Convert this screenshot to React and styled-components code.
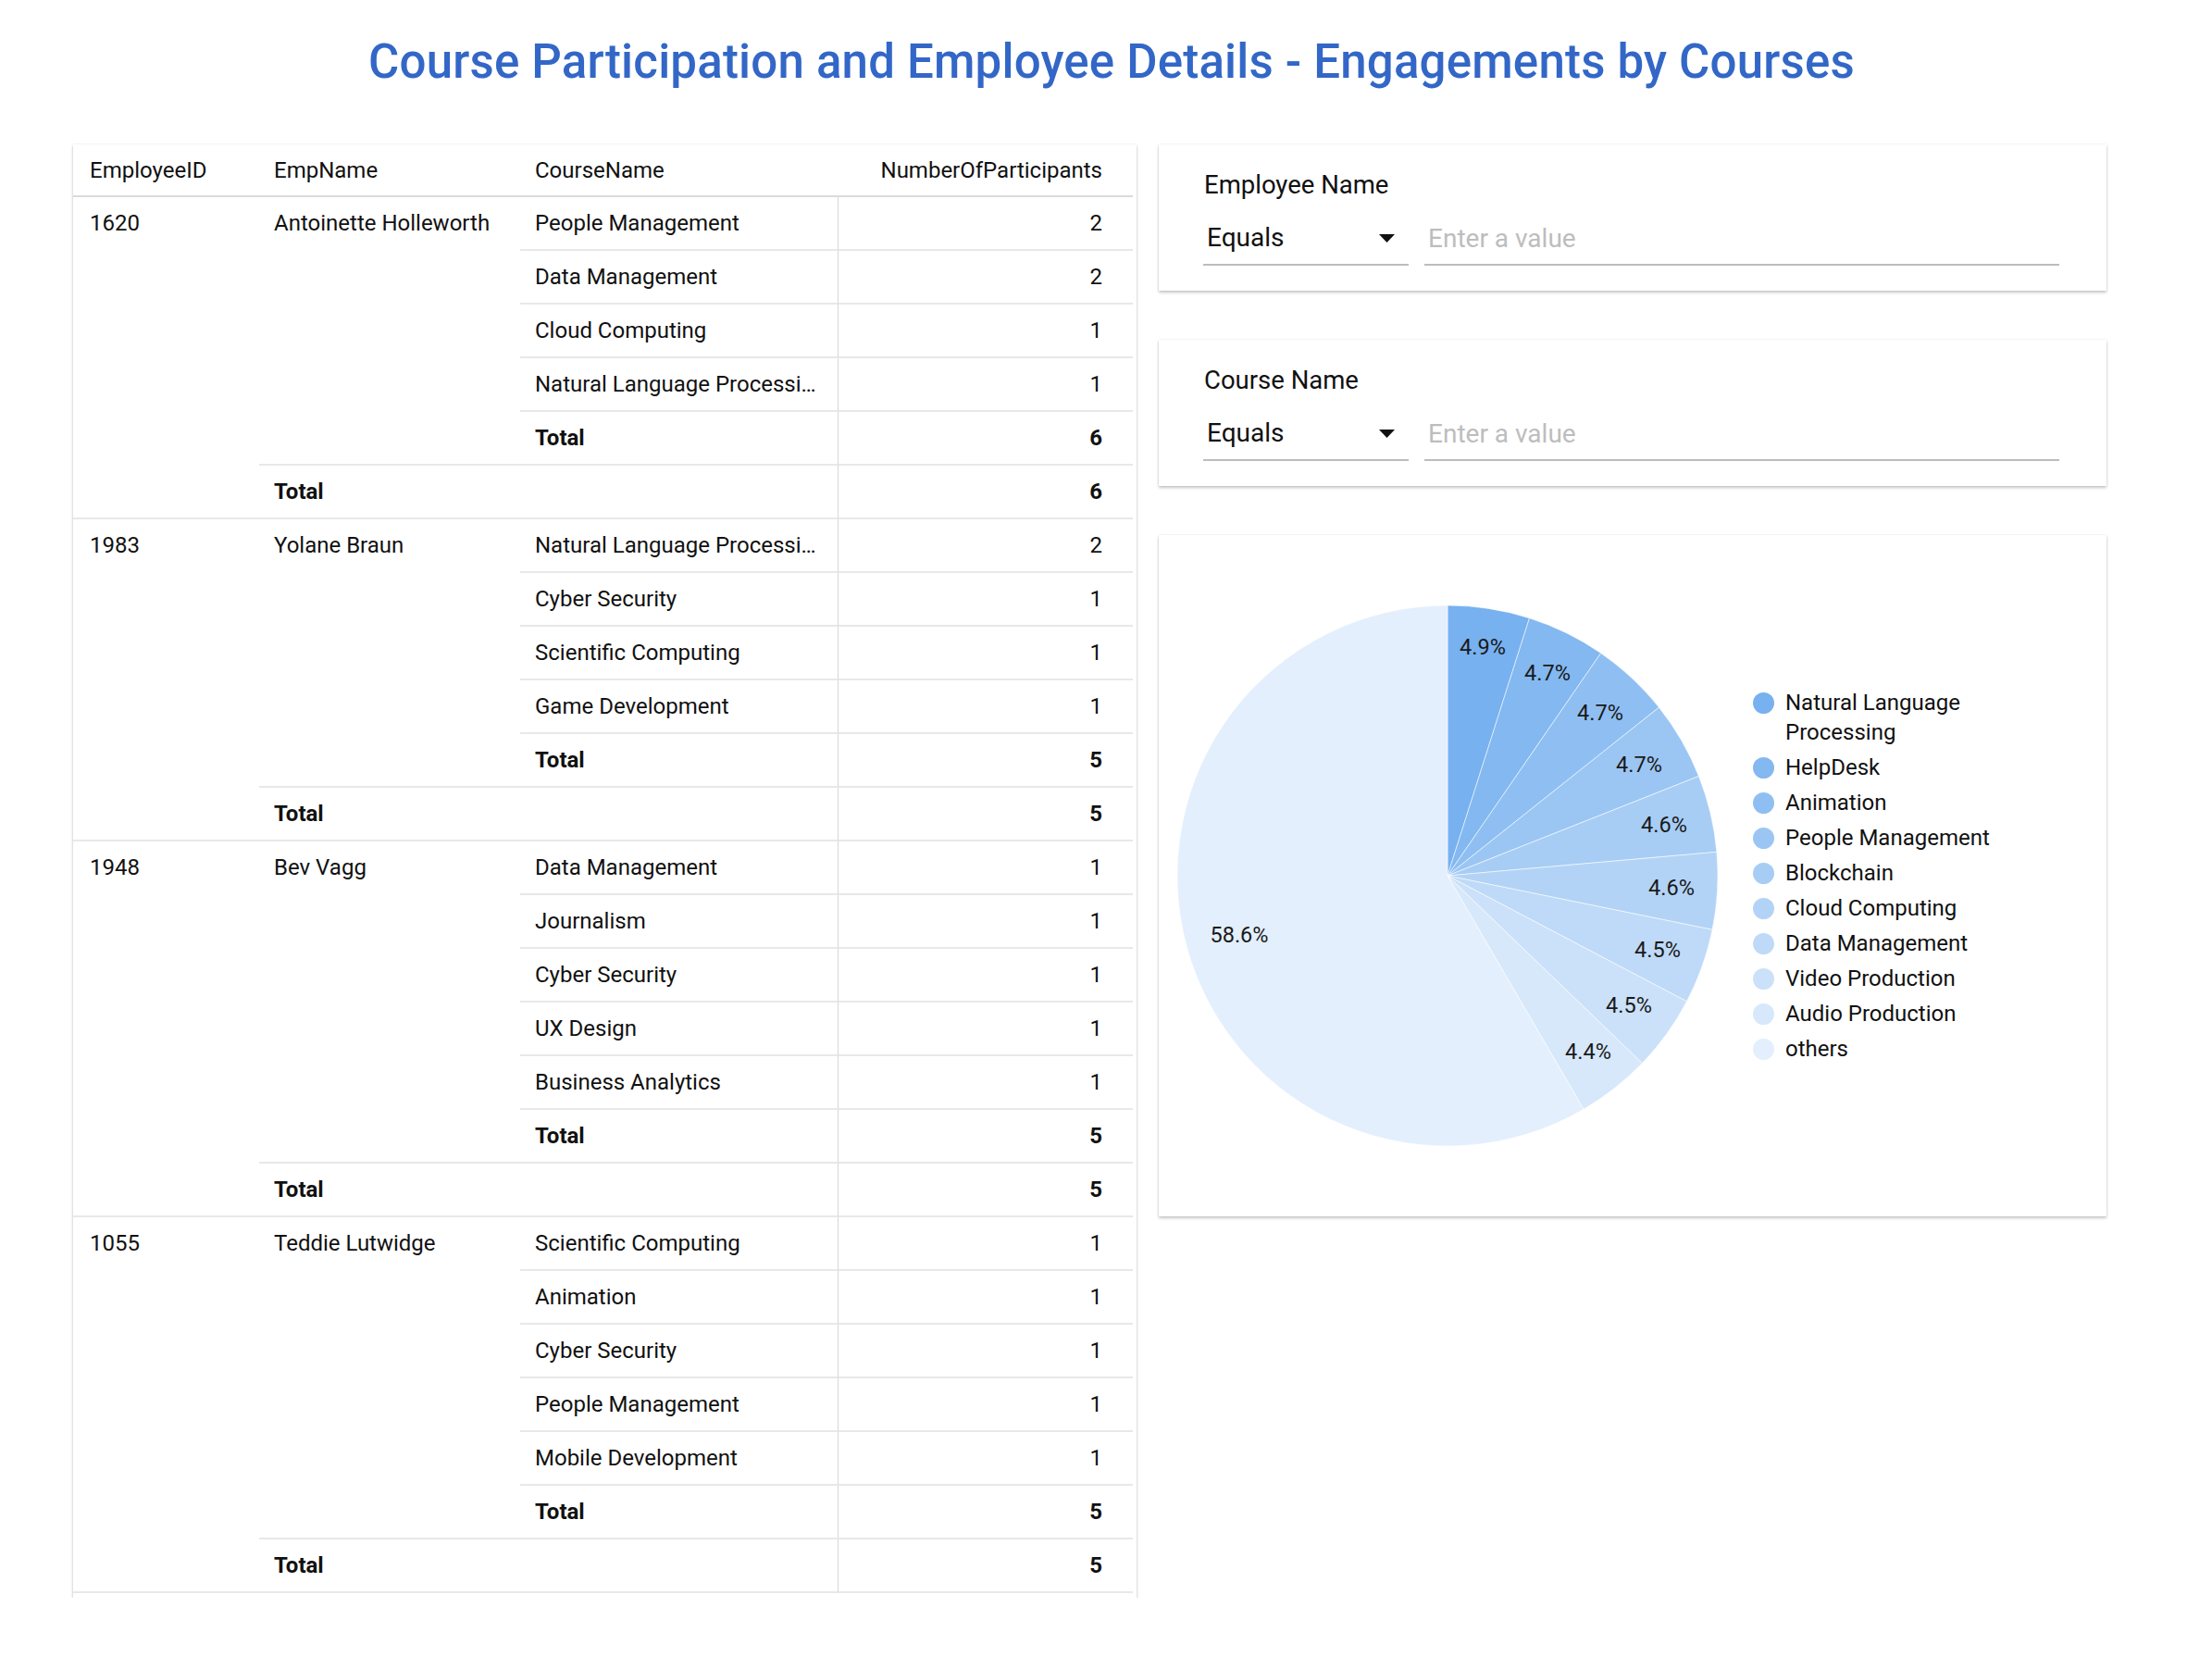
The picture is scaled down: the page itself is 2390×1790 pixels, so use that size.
import React from 'react';
import styled, { createGlobalStyle } from 'styled-components';

const GlobalStyle = createGlobalStyle`
  body {
    margin: 0;
    background: #fff;
    font-family: Roboto, 'Liberation Sans', sans-serif;
    color: #111;
  }
`;

const Page = styled.div`
  width: 2390px;
`;

const Title = styled.h1`
  margin: 0;
  padding: 42px 0 0 12px;
  font-size: 51px;
  line-height: 50px;
  font-weight: 500;
  letter-spacing: 0.2px;
  text-align: center;
  color: #3367c7;
`;

const Layout = styled.div`
  display: grid;
  grid-template-columns: 1149px 1024px;
  gap: 24px;
  align-items: start;
  margin-top: 64px;
  padding-left: 79px;
`;

const Card = styled.div`
  background: #fff;
  box-shadow: 0 0 2px rgba(0, 0, 0, 0.1), 0 2px 3px rgba(0, 0, 0, 0.22);
`;

const TableCard = styled(Card)`
  padding: 0 4px 5px 0;
`;

const Table = styled.table`
  width: 1145px;
  table-layout: fixed;
  border-collapse: separate;
  border-spacing: 0;
  font-size: 24px;

  tbody tr {
    height: 58px;
  }
`;

const HeadCell = styled.th`
  height: 55px;
  padding: 2px ${p => (p.$align === 'right' ? '33px' : '16px')} 0 ${p => (p.$first ? '18px' : '16px')};
  box-sizing: border-box;
  text-align: ${p => p.$align || 'left'};
  font-weight: 400;
  line-height: 53px;
  border-bottom: 2px solid #dadada;
  white-space: nowrap;
`;

const BaseCell = styled.td`
  line-height: 56px;
  border-bottom: 2px solid #e8e8e8;
  font-weight: ${p => (p.$bold ? 700 : 400)};
  white-space: nowrap;
  overflow: hidden;
  text-overflow: ellipsis;
`;

const IdCell = styled(BaseCell)`
  padding: 0 16px 0 18px;
  vertical-align: top;
`;

const NameCell = styled(BaseCell)`
  padding: 0 16px;
  vertical-align: top;
`;

const CourseCell = styled(BaseCell)`
  padding: 0 16px;
  vertical-align: middle;
`;

const NumCell = styled(BaseCell)`
  padding: 0 33px 0 16px;
  text-align: right;
  border-left: 1px solid #d6d6d6;
`;

const RightColumn = styled.div`
  display: flex;
  flex-direction: column;
  gap: 53px;
`;

const FilterCard = styled(Card)`
  height: 158px;
  box-sizing: border-box;
  padding: 27px 51px 0 48px;
`;

const FilterLabel = styled.div`
  font-size: 27.5px;
  line-height: 34px;
  padding-left: 1px;
`;

const Controls = styled.div`
  display: flex;
  margin-top: 17px;
`;

const Select = styled.div`
  width: 222px;
  box-sizing: border-box;
  display: flex;
  align-items: center;
  justify-content: space-between;
  padding: 6px 15px 11px 4px;
  font-size: 28px;
  line-height: 34px;
  border-bottom: 2px solid #bdbdbd;
`;

const Caret = styled.svg`
  width: 17px;
  height: 9px;
  fill: #111;
`;

const ValueInput = styled.input`
  flex: 1;
  margin: 0 0 0 17px;
  height: 53px;
  box-sizing: border-box;
  padding: 6px 4px 11px;
  border: none;
  border-bottom: 2px solid #bdbdbd;
  font-family: Roboto, 'Liberation Sans', sans-serif;
  font-size: 28px;
  line-height: 34px;
  color: #111;
  background: transparent;
  outline: none;

  &::placeholder {
    color: #bdbdbd;
  }
`;

const ChartCard = styled(Card)`
  height: 736px;
  box-sizing: border-box;
  display: flex;
  align-items: center;
  padding-left: 12px;
`;

const PieSvg = styled.svg`
  width: 600px;
  height: 600px;
  flex: none;
`;

const Legend = styled.ul`
  list-style: none;
  margin: 0 0 0 30px;
  padding: 0;
  display: flex;
  flex-direction: column;
  gap: 6px;
`;

const LegendItem = styled.li`
  display: flex;
  align-items: flex-start;
  gap: 12px;
  font-size: 24px;
  line-height: 32px;
`;

const Dot = styled.span`
  width: 23px;
  height: 23px;
  margin-top: 4.5px;
  border-radius: 50%;
  background: ${p => p.$color};
  flex: none;
`;

const LegendText = styled.span`
  max-width: 240px;
`;

const employees = [
  {
    id: '1620',
    name: 'Antoinette Holleworth',
    courses: [
      ['People Management', 2],
      ['Data Management', 2],
      ['Cloud Computing', 1],
      ['Natural Language Processing', 1],
    ],
  },
  {
    id: '1983',
    name: 'Yolane Braun',
    courses: [
      ['Natural Language Processing', 2],
      ['Cyber Security', 1],
      ['Scientific Computing', 1],
      ['Game Development', 1],
    ],
  },
  {
    id: '1948',
    name: 'Bev Vagg',
    courses: [
      ['Data Management', 1],
      ['Journalism', 1],
      ['Cyber Security', 1],
      ['UX Design', 1],
      ['Business Analytics', 1],
    ],
  },
  {
    id: '1055',
    name: 'Teddie Lutwidge',
    courses: [
      ['Scientific Computing', 1],
      ['Animation', 1],
      ['Cyber Security', 1],
      ['People Management', 1],
      ['Mobile Development', 1],
    ],
  },
];

// label positions are in svg coords (600x600, centre 300,300)
const slices = [
  { name: 'Natural Language Processing', value: 4.9, at: [338, 53] },
  { name: 'HelpDesk', value: 4.7, at: [408, 81] },
  { name: 'Animation', value: 4.7, at: [465, 124] },
  { name: 'People Management', value: 4.7, at: [507, 180] },
  { name: 'Blockchain', value: 4.6, at: [534, 245] },
  { name: 'Cloud Computing', value: 4.6, at: [542, 313] },
  { name: 'Data Management', value: 4.5, at: [527, 380] },
  { name: 'Video Production', value: 4.5, at: [496, 440] },
  { name: 'Audio Production', value: 4.4, at: [452, 490] },
  { name: 'others', value: 58.4, label: '58.6%', at: [75, 364] },
];

const shade = i => {
  const from = [119, 177, 239];
  const to = [227, 239, 252];
  const t = i / (slices.length - 1);
  const c = from.map((v, k) => Math.round(v + (to[k] - v) * t));
  return `rgb(${c.join(',')})`;
};

const point = (a, r) => [300 + r * Math.sin(a), 300 - r * Math.cos(a)];

const PieChart = () => {
  const total = slices.reduce((s, x) => s + x.value, 0);
  let start = 0;
  return (
    <PieSvg viewBox="0 0 600 600">
      {slices.map((s, i) => {
        const end = start + (s.value / total) * Math.PI * 2;
        const [x0, y0] = point(start, 292);
        const [x1, y1] = point(end, 292);
        const large = end - start > Math.PI ? 1 : 0;
        start = end;
        return (
          <path
            key={s.name}
            d={`M300 300 L${x0} ${y0} A292 292 0 ${large} 1 ${x1} ${y1} Z`}
            fill={shade(i)}
            stroke="rgba(255,255,255,0.55)"
            strokeWidth="1"
          />
        );
      })}
      {slices.map(s => (
        <text
          key={s.name}
          x={s.at[0]}
          y={s.at[1]}
          textAnchor="middle"
          dominantBaseline="central"
          fontFamily="Roboto, 'Liberation Sans', sans-serif"
          fontSize="23.5"
          fill="#1a1a1a"
        >
          {s.label || `${s.value}%`}
        </text>
      ))}
    </PieSvg>
  );
};

const Filter = ({ label }) => (
  <FilterCard>
    <FilterLabel>{label}</FilterLabel>
    <Controls>
      <Select>
        Equals
        <Caret viewBox="0 0 17 9">
          <path d="M0 0h17L8.5 9z" />
        </Caret>
      </Select>
      <ValueInput placeholder="Enter a value" />
    </Controls>
  </FilterCard>
);

const EmployeeRows = ({ emp }) => {
  const n = emp.courses.length;
  const sum = emp.courses.reduce((s, c) => s + c[1], 0);
  const [first, ...rest] = emp.courses;
  return (
    <>
      <tr>
        <IdCell rowSpan={n + 2}>{emp.id}</IdCell>
        <NameCell rowSpan={n + 1}>{emp.name}</NameCell>
        <CourseCell>{first[0]}</CourseCell>
        <NumCell>{first[1]}</NumCell>
      </tr>
      {rest.map(([course, count]) => (
        <tr key={course}>
          <CourseCell>{course}</CourseCell>
          <NumCell>{count}</NumCell>
        </tr>
      ))}
      <tr>
        <CourseCell $bold>Total</CourseCell>
        <NumCell $bold>{sum}</NumCell>
      </tr>
      <tr>
        <CourseCell colSpan={2} $bold>Total</CourseCell>
        <NumCell $bold>{sum}</NumCell>
      </tr>
    </>
  );
};

const App = () => (
  <Page>
    <GlobalStyle />
    <Title>Course Participation and Employee Details - Engagements by Courses</Title>
    <Layout>
      <TableCard>
        <Table>
          <colgroup>
            <col style={{ width: 201 }} />
            <col style={{ width: 282 }} />
            <col style={{ width: 343 }} />
            <col style={{ width: 319 }} />
          </colgroup>
          <thead>
            <tr>
              <HeadCell $first>EmployeeID</HeadCell>
              <HeadCell>EmpName</HeadCell>
              <HeadCell>CourseName</HeadCell>
              <HeadCell $align="right">NumberOfParticipants</HeadCell>
            </tr>
          </thead>
          <tbody>
            {employees.map(emp => (
              <EmployeeRows key={emp.id} emp={emp} />
            ))}
          </tbody>
        </Table>
      </TableCard>
      <RightColumn>
        <Filter label="Employee Name" />
        <Filter label="Course Name" />
        <ChartCard>
          <PieChart />
          <Legend>
            {slices.map((s, i) => (
              <LegendItem key={s.name}>
                <Dot $color={shade(i)} />
                <LegendText>{s.name}</LegendText>
              </LegendItem>
            ))}
          </Legend>
        </ChartCard>
      </RightColumn>
    </Layout>
  </Page>
);

export default App;
